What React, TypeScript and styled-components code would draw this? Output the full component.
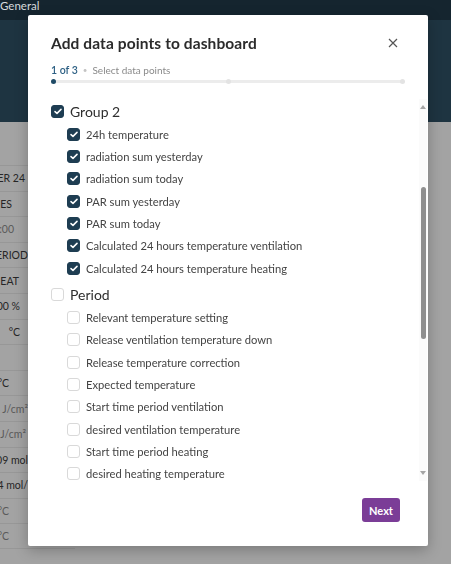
import React from "react";
import styled, { createGlobalStyle } from "styled-components";

const Global = createGlobalStyle`
  html, body { margin: 0; padding: 0; }
  body { font-family: Lato, "Noto Sans", sans-serif; background: #a3a3a3; overflow: hidden; }
  * { box-sizing: border-box; }
`;

const Page = styled.div`
  width: 451px;
  height: 564px;
  display: flex;
  flex-direction: column;
  background: #a3a3a3;
`;

const TopBar = styled.div`
  height: 20px;
  background: #15252f;
  color: #d5dadd;
  font-size: 11.5px;
  line-height: 11px;
  display: flex;
  align-items: flex-start;
`;

const Band = styled.div`
  height: 102px;
  background: #1e3441;
`;

const Table = styled.div`
  width: 75px;
  padding-top: 43px;
  display: flex;
  flex-direction: column;
`;

const TRow = styled.div`
  height: 25.6px;
  border-top: 1px solid #979797;
  display: flex;
  align-items: center;
  &:last-child { border-bottom: 1px solid #979797; }
`;

const Cell = styled.div<{ $dim?: boolean; $bold?: boolean; $pad: number }>`
  width: 28px;
  padding-right: ${(p) => p.$pad}px;
  display: flex;
  justify-content: flex-end;
  white-space: nowrap;
  font-size: 10.5px;
  color: ${(p) => (p.$dim ? "#5a5a5a" : "#262626")};
  font-weight: ${(p) => (p.$bold ? 700 : 400)};
`;

const Modal = styled.div`
  position: fixed;
  left: 28px;
  top: 15px;
  width: 400px;
  height: 531px;
  background: #ffffff;
  border-radius: 2px;
  box-shadow: 0 4px 14px rgba(0, 0, 0, 0.25);
  display: flex;
  flex-direction: column;
`;

const Header = styled.div`
  padding: 16px 30px 0 23px;
  display: flex;
  align-items: center;
  justify-content: space-between;
  height: 40px;
`;

const Title = styled.h1`
  margin: 0;
  font-size: 15.5px;
  line-height: 24px;
  font-weight: 700;
  color: #2b2b2b;
  letter-spacing: 0.1px;
`;

const CloseBtn = styled.button`
  border: 0;
  background: none;
  padding: 0;
  width: 10px;
  height: 10px;
  display: flex;
  cursor: pointer;
`;

const Steps = styled.div`
  padding: 8px 23px 0 23px;
  display: flex;
  align-items: center;
  gap: 5px;
  font-size: 10px;
  line-height: 14px;
`;

const StepNum = styled.span`
  color: #2d6084;
  font-weight: 600;
  font-size: 10.5px;
`;

const StepDot = styled.span`
  color: #c4c4c4;
  font-size: 8px;
`;

const StepName = styled.span`
  color: #8a8a8a;
`;

const Progress = styled.div`
  margin: 2px 23px 0 23px;
  height: 5px;
  position: relative;
  display: flex;
  align-items: center;
  justify-content: space-between;
`;

const ProgressLine = styled.div`
  position: absolute;
  left: 2px;
  right: 2px;
  top: 1px;
  height: 3px;
  background: #ececec;
  border-radius: 2px;
`;

const Node = styled.span<{ $active?: boolean }>`
  position: relative;
  width: 5px;
  height: 5px;
  border-radius: 50%;
  background: ${(p) => (p.$active ? "#1f4a66" : "#e3e3e3")};
`;

const Body = styled.div`
  margin-top: 15px;
  height: 382px;
  display: flex;
`;

const List = styled.div`
  flex: 1;
  overflow: hidden;
  padding: 1px 0 0 23px;
`;

const Group = styled.div`
  margin-bottom: 4px;
`;

const GroupRow = styled.label`
  height: 23px;
  display: flex;
  align-items: center;
  gap: 6px;
  font-size: 14px;
  color: #2e2e2e;
`;

const ItemRow = styled.label`
  height: 22.33px;
  padding-left: 16px;
  display: flex;
  align-items: center;
  gap: 6px;
  font-size: 11.2px;
  color: #444;
`;

const Box = styled.span<{ $checked: boolean }>`
  width: 13px;
  height: 13px;
  flex: none;
  border-radius: 3px;
  display: flex;
  align-items: center;
  justify-content: center;
  background: ${(p) => (p.$checked ? "#1e3d52" : "#ffffff")};
  border: 1px solid ${(p) => (p.$checked ? "#1e3d52" : "#d9d9d9")};
`;

const Track = styled.div`
  width: 8px;
  margin-right: 1px;
  background: #fbfbfb;
  display: flex;
  flex-direction: column;
  align-items: center;
`;

const Arrow = styled.div`
  height: 16px;
  display: flex;
  align-items: center;
  justify-content: center;
`;

const Thumb = styled.div`
  margin-top: 72px;
  width: 5px;
  height: 152px;
  border-radius: 3px;
  background: #8f8f8f;
`;

const Spacer = styled.div`
  flex: 1;
`;

const Footer = styled.div`
  flex: 1;
  display: flex;
  justify-content: flex-end;
  align-items: flex-start;
  padding: 17px 28px 0 0;
`;

const NextBtn = styled.button`
  width: 38px;
  height: 24px;
  border: 0;
  border-radius: 3px;
  background: #7b3d97;
  color: #ffffff;
  font-family: Lato, "Noto Sans", sans-serif;
  font-weight: 700;
  font-size: 11px;
  padding: 0;
`;

const Check = () => (
  <svg width="8" height="7" viewBox="0 0 8 7" fill="none">
    <path d="M1 3.6 L3 5.4 L7 1.4" stroke="#fff" strokeWidth="1.5" strokeLinecap="round" strokeLinejoin="round" />
  </svg>
);

const CheckBox = ({ checked }: { checked: boolean }) => (
  <Box $checked={checked}>{checked && <Check />}</Box>
);

type G = { name: string; checked: boolean; items: string[] };

const groups: G[] = [
  {
    name: "Group 2",
    checked: true,
    items: [
      "24h temperature",
      "radiation sum yesterday",
      "radiation sum today",
      "PAR sum yesterday",
      "PAR sum today",
      "Calculated 24 hours temperature ventilation",
      "Calculated 24 hours temperature heating",
    ],
  },
  {
    name: "Period",
    checked: false,
    items: [
      "Relevant temperature setting",
      "Release ventilation temperature down",
      "Release temperature correction",
      "Expected temperature",
      "Start time period ventilation",
      "desired ventilation temperature",
      "Start time period heating",
      "desired heating temperature",
      "Heating temperature offset",
      "Ventilation temperature offset",
    ],
  },
];

const rows: { t: string; pad: number; dim?: boolean; bold?: boolean }[] = [
  { t: "ER 24", pad: 3 },
  { t: "ES", pad: 16 },
  { t: ":00", pad: 14, dim: true },
  { t: "ERIOD", pad: 0 },
  { t: "HEAT", pad: 9 },
  { t: "00 %", pad: 8 },
  { t: "°C", pad: 8 },
  { t: "", pad: 0 },
  { t: "°C", pad: 19 },
  { t: "4 J/cm²", pad: 0, dim: true },
  { t: "J/cm²", pad: 2, dim: true },
  { t: "09 mol", pad: 0 },
  { t: "4 mol/", pad: 0 },
  { t: "°C", pad: 19, dim: true },
  { t: "°C", pad: 19, dim: true },
];

export default function App() {
  return (
    <>
      <Global />
      <Page>
        <TopBar>General</TopBar>
        <Band />
        <Table>
          {rows.map((r, i) => (
            <TRow key={i}>
              <Cell $dim={r.dim} $bold={r.bold} $pad={r.pad}>
                {r.t}
              </Cell>
            </TRow>
          ))}
        </Table>
      </Page>
      <Modal>
        <Header>
          <Title>Add data points to dashboard</Title>
          <CloseBtn aria-label="Close">
            <svg width="10" height="10" viewBox="0 0 10 10">
              <path d="M1 1 L9 9 M9 1 L1 9" stroke="#555" strokeWidth="1.2" />
            </svg>
          </CloseBtn>
        </Header>
        <Steps>
          <StepNum>1 of 3</StepNum>
          <StepDot>•</StepDot>
          <StepName>Select data points</StepName>
        </Steps>
        <Progress>
          <ProgressLine />
          <Node $active />
          <Node />
          <Node />
        </Progress>
        <Body>
          <List>
            {groups.map((g) => (
              <Group key={g.name}>
                <GroupRow>
                  <CheckBox checked={g.checked} />
                  {g.name}
                </GroupRow>
                {g.items.map((it) => (
                  <ItemRow key={it}>
                    <CheckBox checked={g.checked} />
                    {it}
                  </ItemRow>
                ))}
              </Group>
            ))}
          </List>
          <Track>
            <Arrow>
              <svg width="6" height="4" viewBox="0 0 6 4">
                <path d="M0 4 L3 0 L6 4 Z" fill="#a5a5a5" />
              </svg>
            </Arrow>
            <Thumb />
            <Spacer />
            <Arrow>
              <svg width="6" height="4" viewBox="0 0 6 4">
                <path d="M0 0 L3 4 L6 0 Z" fill="#a5a5a5" />
              </svg>
            </Arrow>
          </Track>
        </Body>
        <Footer>
          <NextBtn>Next</NextBtn>
        </Footer>
      </Modal>
    </>
  );
}
